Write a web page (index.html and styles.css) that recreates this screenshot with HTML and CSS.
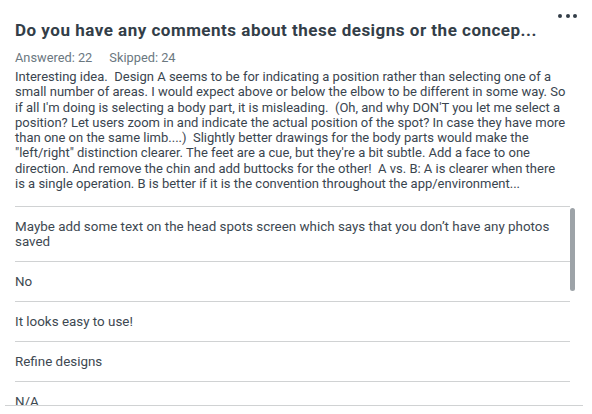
FILE: index.html
```html
<!DOCTYPE html>
<html>
<head>
<meta charset="utf-8">
<link rel="stylesheet" href="styles.css">
</head>
<body>
<div class="card">
  <div class="menu" aria-label="More"><span></span><span></span><span></span></div>
  <h1 class="title">Do you have any comments about these designs or the concep...</h1>
  <div class="meta"><span>Answered: 22</span><span>Skipped: 24</span></div>
  <p class="comment">Interesting idea.&nbsp; Design A seems to be for indicating a position rather than selecting one of a<br>small number of areas. I would expect above or below the elbow to be different in some way. So<br>if all I'm doing is selecting a body part, it is misleading.&nbsp; (Oh, and why DON'T you let me select a<br>position? Let users zoom in and indicate the actual position of the spot? In case they have more<br>than one on the same limb....)&nbsp; Slightly better drawings for the body parts would make the<br>"left/right" distinction clearer. The feet are a cue, but they're a bit subtle. Add a face to one<br>direction. And remove the chin and add buttocks for the other!&nbsp; A vs. B: A is clearer when there<br>is a single operation. B is better if it is the convention throughout the app/environment...</p>
  <div class="list-wrap">
    <ul class="list">
      <li class="row">Maybe add some text on the head spots screen which says that you don’t have any photos<br>saved</li>
      <li class="row">No</li>
      <li class="row">It looks easy to use!</li>
      <li class="row">Refine designs</li>
      <li class="row">N/A</li>
    </ul>
    <div class="thumb"></div>
  </div>
  <div class="rule"></div>
</div>
</body>
</html>
```
FILE: styles.css
```css
html, body {
  margin: 0;
  padding: 0;
  background: #ffffff;
}
body {
  font-family: Roboto, "Liberation Sans", sans-serif;
  color: #333e48;
}
.card {
  position: relative;
  width: 592px;
  height: 414px;
  overflow: hidden;
}
.menu {
  position: absolute;
  top: 14px;
  left: 558px;
  display: flex;
  gap: 3.5px;
}
.menu span {
  width: 4px;
  height: 4px;
  border-radius: 50%;
  background: #333e48;
}
.title {
  margin: 18px 0 0 15px;
  font-size: 17px;
  line-height: 24px;
  font-weight: 700;
  letter-spacing: 0.5px;
  color: #333e48;
  white-space: nowrap;
}
.meta {
  margin: 8px 0 0 15px;
  display: flex;
  gap: 17px;
  font-size: 12.8px;
  line-height: 16px;
  color: #6b787f;
}
.comment {
  margin: 3px 0 0 15px;
  font-size: 13px;
  line-height: 15.3px;
  color: #3a454f;
  white-space: nowrap;
}
.list-wrap {
  position: relative;
  margin-top: 15px;
  height: 199px;
  overflow: hidden;
}
.list {
  list-style: none;
  margin: 0 0 0 15px;
  padding: 0;
  width: 555px;
}
.row {
  border-top: 1px solid #d0d2d3;
  padding: 12px 0 12px 0;
  font-size: 13.4px;
  line-height: 15px;
  color: #3d4851;
  white-space: nowrap;
}
.thumb {
  position: absolute;
  left: 570px;
  top: 2px;
  width: 5px;
  height: 83px;
  border-radius: 3px;
  background: #9da3a8;
}
.rule {
  margin-left: 5px;
  width: 578px;
  height: 1px;
  background: #d0d2d3;
}
```
